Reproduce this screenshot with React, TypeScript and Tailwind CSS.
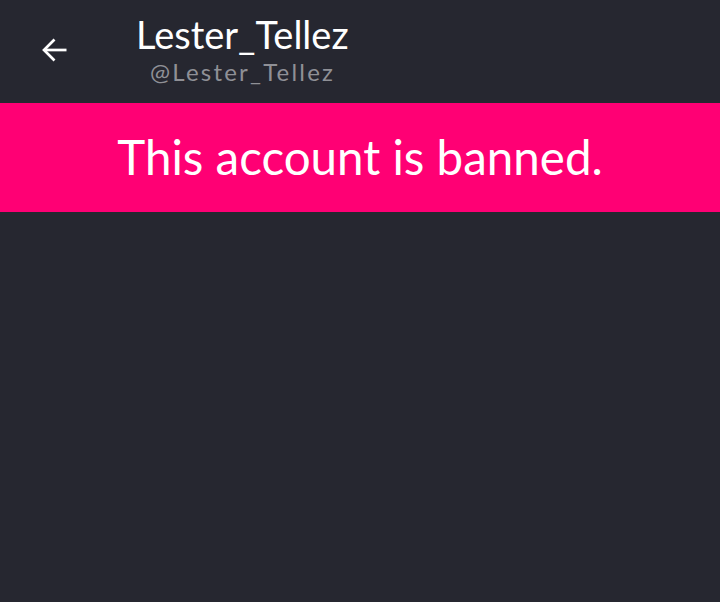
import React from "react";

export default function App() {
  return (
    <div className="w-[720px] h-[602px] bg-[#262730] flex flex-col" style={{ fontFamily: "Lato, 'Noto Sans', sans-serif" }}>
      <div className="h-[103px] flex items-start">
        <div className="w-[136px] h-full flex items-start pl-[41px] pt-[37px]">
          <svg width="26" height="26" viewBox="0 0 26 26" fill="none" stroke="#ffffff" strokeWidth="2.7" strokeLinecap="butt" strokeLinejoin="miter">
            <path d="M25.5 13H3" />
            <path d="M13.5 2.5L3 13l10.5 10.5" />
          </svg>
        </div>
        <div className="flex flex-col pt-[10px]">
          <div className="text-white text-[38px] leading-[48px]">Lester_Tellez</div>
          <div className="text-[#8f9096] text-[24px] leading-[27px] pl-[14px] tracking-[2.2px]">@Lester_Tellez</div>
        </div>
      </div>
      <div className="h-[109px] bg-[#ff0074] flex items-center justify-center">
        <span className="text-white text-[47.5px] leading-none pb-[2px]">This account is banned.</span>
      </div>
    </div>
  );
}
